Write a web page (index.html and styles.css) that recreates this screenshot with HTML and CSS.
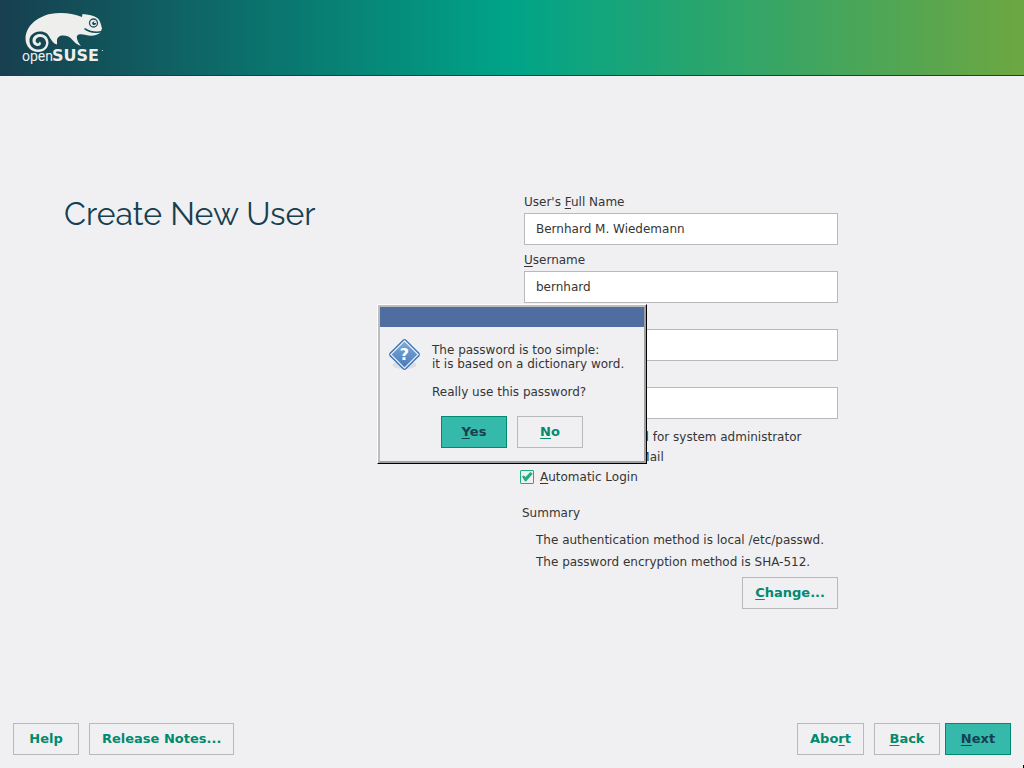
FILE: index.html
```html
<!DOCTYPE html>
<html lang="en">
<head>
<meta charset="utf-8">
<title>Create New User</title>
<link rel="stylesheet" href="styles.css">
</head>
<body>
<header class="banner">
  <svg class="logo" width="86" height="60" viewBox="0 0 86 60" role="img" aria-label="openSUSE">
    <path class="logo-body" d="M62 9L62.500 6C68 6.500 74 7.500 78 10.500C80.500 13 81 17 82 20.500L81 23C77 24 70 23.500 65 20L64 21C68 24.500 74 26 80.500 24.500C78 27.500 71 28.500 66 27C60 25.500 56 26 57 30.500C57.500 34 59.500 36 61 38C57 36.500 54 34 52 31.500C50 29 47 27.500 43 27.500C39.500 27.500 37 29.500 37 32.500L37 36.500C33 35.500 32 32.500 30 30C28 25 24 23 19.500 23.500C13 24 9 28 9.500 33.500C10 39 14 41.500 18.500 41.500C23.500 41.500 26.500 38 26 34C25.500 30.500 22.500 28.500 19.500 29C16.500 29.500 15 32 16 34C17 36 19.500 35.500 19.500 33.500C22 35 21 38 18 38C14.500 38 12.500 35.500 12.500 32.500C12.500 28.500 16 26 20 26C25 26 28.500 30 28.500 34.500C28.500 40 24 44 18.500 44C10.500 44 5.500 38 5.500 30.500C6 17 18 9 30 6C41 4 52 5 62 9Z"/>
    <circle class="logo-eye" cx="73.500" cy="15" r="4"/>
    <path class="logo-pupil" d="M74 13.500C76.500 13 77 16.500 74.500 17C72 17.500 71 14 74 13.500Z"/>
    <path class="logo-body" d="M74 13.800H76V15H74Z"/>
    <text class="logo-open" x="2" y="53">open</text>
    <text class="logo-suse" x="32" y="53">SUSE</text>
    <circle class="logo-body" cx="82.500" cy="42.500" r=".6"/>
  </svg>
</header>

<main class="page">
  <h1 class="title">Create New User</h1>
  <form class="form" onsubmit="return false">
    <div class="field">
      <label for="fullname">User's <span class="key">F</span>ull Name</label>
      <input class="text" id="fullname" type="text" value="Bernhard M. Wiedemann">
    </div>
    <div class="field">
      <label for="username"><span class="key">U</span>sername</label>
      <input class="text" id="username" type="text" value="bernhard">
    </div>
    <div class="field">
      <label for="password"><span class="key">P</span>assword</label>
      <input class="text" id="password" type="password">
    </div>
    <div class="field">
      <label for="confirm">Con<span class="key">f</span>irm Password</label>
      <input class="text" id="confirm" type="password">
    </div>
    <div class="checks">
      <label class="check"><input type="checkbox" checked><span>U<span class="key">s</span>e this password for system administrator</span></label>
      <label class="check"><input type="checkbox"><span><span class="key">R</span>eceive System Mail</span></label>
      <label class="check"><input type="checkbox" checked><span><span class="key">A</span>utomatic Login</span></label>
    </div>
    <section class="summary">
      <h2 class="summary-title">Summary</h2>
      <p class="summary-line">The authentication method is local /etc/passwd.</p>
      <p class="summary-line">The password encryption method is SHA-512.</p>
      <button class="button change" type="button"><span class="key">C</span>hange...</button>
    </section>
  </form>
</main>

<footer class="actions">
  <div class="group">
    <button class="button" type="button">Help</button>
    <button class="button" type="button">Release Notes...</button>
  </div>
  <div class="group">
    <button class="button" type="button">Abo<span class="key">r</span>t</button>
    <div class="pair">
      <button class="button" type="button"><span class="key">B</span>ack</button>
      <button class="button primary" type="button"><span class="key">N</span>ext</button>
    </div>
  </div>
</footer>

<div class="dialog" role="dialog" aria-describedby="message">
  <div class="frame">
    <div class="titlebar"></div>
    <div class="message">
      <svg class="icon" width="34" height="34" viewBox="0 0 34 34" aria-hidden="true">
        <defs>
          <linearGradient id="blue" x1="0" y1="0" x2="0" y2="1">
            <stop offset="0" stop-color="#82acd8"/>
            <stop offset="1" stop-color="#4479b7"/>
          </linearGradient>
        </defs>
        <ellipse cx="17.500" cy="27" rx="12" ry="4" fill="#dddee1"/>
        <path d="M15.800 1.700Q17.500 .3 19.200 1.700L32.300 14.800Q33.700 16.500 32.300 18.200L19.200 31.300Q17.500 32.700 15.800 31.300L2.700 18.200Q1.300 16.500 2.700 14.800Z" fill="#3d71b3"/>
        <path d="M17.500 2.800L31.200 16.500L17.500 30.200L3.800 16.500Z" fill="url(#blue)" stroke="#e3edf8" stroke-width="1.300"/>
        <text class="icon-mark" x="17.500" y="22" text-anchor="middle">?</text>
      </svg>
      <p class="message-text" id="message">The password is too simple:<br>it is based on a dictionary word.<br><br>Really use this password?</p>
    </div>
    <div class="choices">
      <button class="button primary" type="button"><span class="key">Y</span>es</button>
      <button class="button" type="button"><span class="key">N</span>o</button>
    </div>
  </div>
</div>
<div class="pointer"></div>
</body>
</html>
```
FILE: styles.css
```css
* {
  box-sizing: border-box;
}

body {
  margin: 0;
  min-height: 100vh;
  display: flex;
  flex-direction: column;
  background: #f0f0f2;
  color: #353535;
  font: 12px/14px "DejaVu Sans", sans-serif;
}

.banner {
  height: 76px;
  padding: 8px 20px;
  border-bottom: 1px solid #173f4f;
  background: linear-gradient(to right, #173f4f, #00a489 50%, #6da741);
}

.logo {
  display: block;
}

.logo-body {
  fill: #eeeeec;
}

.logo-eye {
  fill: #eeeeec;
  stroke: #17505a;
  stroke-width: 1.300;
}

.logo-pupil {
  fill: #17505a;
}

.logo-open {
  fill: #eeeeec;
  font: 14px Roboto, sans-serif;
}

.logo-suse {
  fill: #eeeeec;
  font: bold 16px "DejaVu Sans", sans-serif;
}

.page {
  flex: 1;
  display: grid;
  grid-template-columns: 1fr 1fr;
  align-content: center;
  padding: 4px 0 0 24px;
}

.title {
  margin: 0;
  padding-left: 40px;
  color: #173f4f;
  font: 400 32px/38px Raleway, Lato, sans-serif;
}

.form {
  width: 314px;
}

.field {
  display: flex;
  flex-direction: column;
  gap: 4px;
  margin-bottom: 8px;
}

.text {
  width: 100%;
  height: 32px;
  padding: 0 11px;
  border: 1px solid #b8b9bb;
  border-radius: 0;
  background: #fff;
  color: inherit;
  font: inherit;
}

.key {
  text-decoration: underline;
  text-underline-offset: 2px;
  text-decoration-thickness: 1px;
  text-decoration-skip-ink: none;
}

.checks {
  display: flex;
  flex-direction: column;
  margin-left: -4px;
}

.check {
  display: flex;
  align-items: center;
  gap: 6px;
  height: 20px;
}

.check input {
  appearance: none;
  width: 14px;
  height: 14px;
  margin: 0;
  border: 1px solid #21ae7e;
  border-radius: 1px;
}

.check input:checked::before {
  content: "";
  display: block;
  height: 12px;
  background: #21ae7e;
  clip-path: polygon(8% 50%, 24% 42%, 38% 54%, 78% 12%, 98% 28%, 42% 92%, 32% 90%);
}

.summary {
  display: flex;
  flex-direction: column;
  gap: 8px;
  margin: 19px 0 0 -2px;
}

.summary-title {
  margin: 0 0 5px;
  font: inherit;
}

.summary-line {
  margin: 0 0 0 14px;
  white-space: nowrap;
}

.button {
  min-width: 66px;
  height: 32px;
  padding: 0 12px;
  border: 1px solid #b8b9bb;
  background: #f0f0f2;
  color: #008a6e;
  font: bold 13px/14px "DejaVu Sans", sans-serif;
}

.primary {
  border-color: #008a6e;
  background: #35b9ab;
  color: #173f4f;
}

.change {
  align-self: flex-end;
}

.actions,
.group {
  display: flex;
  justify-content: space-between;
  gap: 10px;
}

.actions {
  padding: 0 13px 13px;
}

.pair {
  display: flex;
  gap: 5px;
}

.dialog {
  position: fixed;
  top: 50%;
  left: 50%;
  transform: translate(-50%, -50%);
  width: 270px;
  border: 1px solid;
  border-color: #fff #000 #000 #fff;
  background: #f0f0f2;
}

.frame {
  border: 2px solid;
  border-color: #bebebe #a0a0a0 #a0a0a0 #bebebe;
}

.titlebar {
  height: 20px;
  background: #4f6e9f;
}

.message {
  display: flex;
  gap: 11px;
  padding: 11px 7px 0;
}

.icon {
  flex: none;
}

.icon-mark {
  fill: #fff;
  font: bold 16px "DejaVu Sans", sans-serif;
}

.message-text {
  margin: 5px 0 0;
  white-space: nowrap;
}

.choices {
  display: flex;
  justify-content: center;
  gap: 10px;
  padding: 17px 0 13px;
}

.pointer {
  position: fixed;
  right: 0;
  bottom: 0;
  width: 1px;
  height: 3px;
  background: #000;
}
```
